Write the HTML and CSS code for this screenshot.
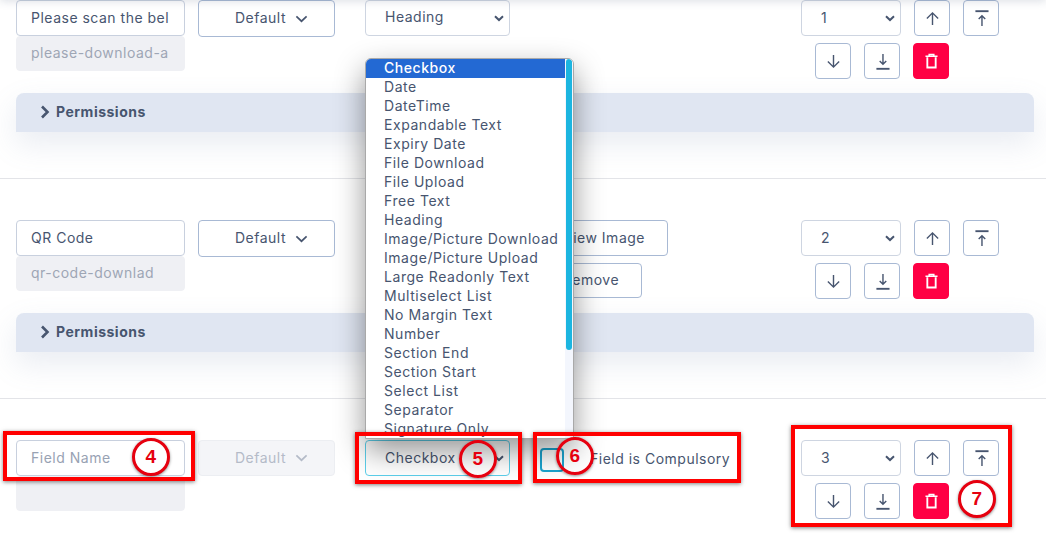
FILE: index.html
```html
<!DOCTYPE html>
<html lang="en">
<head>
<meta charset="utf-8">
<title>Form fields</title>
<link rel="stylesheet" href="styles.css">
</head>
<body>
<svg class="defs" width="0" height="0" aria-hidden="true">
  <symbol id="i-chev" viewBox="0 0 14 8"><path d="M1.5 1.2 7 6.4l5.5-5.2" fill="none" stroke="currentColor" stroke-width="1.8"/></symbol>
  <symbol id="i-right" viewBox="0 0 10 14"><path d="M2 1.5 7.5 7 2 12.5" fill="none" stroke="currentColor" stroke-width="2.6"/></symbol>
  <symbol id="i-up" viewBox="0 0 16 16"><path d="M8 15V2M2 8l6-6 6 6" fill="none" stroke="currentColor" stroke-width="1.5"/></symbol>
  <symbol id="i-down" viewBox="0 0 16 16"><path d="M8 1v13M2 8l6 6 6-6" fill="none" stroke="currentColor" stroke-width="1.5"/></symbol>
  <symbol id="i-top" viewBox="0 0 16 18"><path d="M1.500 1.200h14" stroke="currentColor" stroke-width="2" fill="none"/><path d="M8.500 17V6M5 9.500l3.500-3.500L12 9.500" fill="none" stroke="currentColor" stroke-width="1.5"/></symbol>
  <symbol id="i-bottom" viewBox="0 0 16 18"><path d="M1.500 16.800h14" stroke="currentColor" stroke-width="2" fill="none"/><path d="M8.500 1v11M5 8.500l3.500 3.500L12 8.500" fill="none" stroke="currentColor" stroke-width="1.500"/></symbol>
  <symbol id="i-trash" viewBox="0 0 14 16"><path d="M0.500 3h13M4.500 3V1h5v2" fill="none" stroke="currentColor" stroke-width="1.600"/><path d="M2.500 4v11h9V4" fill="none" stroke="currentColor" stroke-width="2"/></symbol>
</svg>

<div class="topshade"></div>

<main class="list">
  <section class="row">
    <div class="fields">
      <div class="names">
        <input class="input" type="text" value="Please scan the below QR code">
        <input class="input slug" type="text" value="please-download-and-install" disabled>
      </div>
      <button class="default" type="button">Default <svg class="chev"><use href="#i-chev"/></svg></button>
      <select class="select type"><option>Heading</option></select>
      <div class="extra"></div>
      <div class="order">
        <div class="order-line">
          <select class="select num"><option>1</option></select>
          <button class="icon" type="button"><svg class="ic"><use href="#i-up"/></svg></button>
          <button class="icon" type="button"><svg class="ic tall"><use href="#i-top"/></svg></button>
        </div>
        <div class="order-line second">
          <button class="icon" type="button"><svg class="ic"><use href="#i-down"/></svg></button>
          <button class="icon" type="button"><svg class="ic tall"><use href="#i-bottom"/></svg></button>
          <button class="icon danger" type="button"><svg class="ic trash"><use href="#i-trash"/></svg></button>
        </div>
      </div>
    </div>
    <div class="panel"><svg class="right"><use href="#i-right"/></svg>Permissions</div>
  </section>

  <section class="row">
    <div class="fields">
      <div class="names">
        <input class="input" type="text" value="QR Code">
        <input class="input slug" type="text" value="qr-code-downlad" disabled>
      </div>
      <button class="default" type="button">Default <svg class="chev"><use href="#i-chev"/></svg></button>
      <select class="select type"><option>Image/Picture Download</option></select>
      <div class="extra">
        <button class="plain view" type="button">View Image</button>
        <button class="plain remove" type="button">Remove</button>
      </div>
      <div class="order">
        <div class="order-line">
          <select class="select num"><option>2</option></select>
          <button class="icon" type="button"><svg class="ic"><use href="#i-up"/></svg></button>
          <button class="icon" type="button"><svg class="ic tall"><use href="#i-top"/></svg></button>
        </div>
        <div class="order-line second">
          <button class="icon" type="button"><svg class="ic"><use href="#i-down"/></svg></button>
          <button class="icon" type="button"><svg class="ic tall"><use href="#i-bottom"/></svg></button>
          <button class="icon danger" type="button"><svg class="ic trash"><use href="#i-trash"/></svg></button>
        </div>
      </div>
    </div>
    <div class="panel"><svg class="right"><use href="#i-right"/></svg>Permissions</div>
  </section>

  <section class="row last">
    <div class="fields">
      <div class="names">
        <input class="input" type="text" placeholder="Field Name">
        <input class="input slug" type="text" disabled>
      </div>
      <button class="default off" type="button" disabled>Default <svg class="chev"><use href="#i-chev"/></svg></button>
      <select class="select type focus"><option>Checkbox</option></select>
      <label class="extra check"><input class="box" type="checkbox"><span>Field is Compulsory</span></label>
      <div class="order">
        <div class="order-line">
          <select class="select num"><option>3</option></select>
          <button class="icon" type="button"><svg class="ic"><use href="#i-up"/></svg></button>
          <button class="icon" type="button"><svg class="ic tall"><use href="#i-top"/></svg></button>
        </div>
        <div class="order-line second">
          <button class="icon" type="button"><svg class="ic"><use href="#i-down"/></svg></button>
          <button class="icon" type="button"><svg class="ic tall"><use href="#i-bottom"/></svg></button>
          <button class="icon danger" type="button"><svg class="ic trash"><use href="#i-trash"/></svg></button>
        </div>
      </div>
    </div>
    <div class="panel edge"></div>
  </section>
</main>

<div class="dropdown">
  <ul class="options">
    <li class="selected">Checkbox</li>
    <li>Date</li>
    <li>DateTime</li>
    <li>Expandable Text</li>
    <li>Expiry Date</li>
    <li>File Download</li>
    <li>File Upload</li>
    <li>Free Text</li>
    <li>Heading</li>
    <li>Image/Picture Download</li>
    <li>Image/Picture Upload</li>
    <li>Large Readonly Text</li>
    <li>Multiselect List</li>
    <li>No Margin Text</li>
    <li>Number</li>
    <li>Section End</li>
    <li>Section Start</li>
    <li>Select List</li>
    <li>Separator</li>
    <li>Signature Only</li>
  </ul>
  <div class="track"><div class="thumb"></div></div>
</div>

<div class="mark box-4"></div>
<div class="mark box-5"></div>
<div class="mark box-6"></div>
<div class="mark box-7"></div>
<div class="badge badge-4">4</div>
<div class="badge badge-5">5</div>
<div class="badge badge-6">6</div>
<div class="badge badge-7">7</div>
</body>
</html>
```

FILE: styles.css
```css
* { box-sizing: border-box; }

html, body {
  margin: 0;
  height: 533px;
  overflow: hidden;
  background: #fff;
}

body {
  position: relative;
  font-family: Inter, "Liberation Sans", sans-serif;
  font-size: 14px;
  letter-spacing: 0.5px;
  color: #47556f;
}

.defs { position: absolute; }

.topshade {
  position: absolute;
  top: -6px;
  left: 0;
  right: 0;
  height: 6px;
  box-shadow: 0 0 10px rgba(70, 85, 120, 0.28);
  z-index: 1;
}

.list { margin-top: -41px; }

.row {
  height: 220px;
  padding: 41px 12px 0 16px;
  border-bottom: 1px solid #e3e4e8;
}

.row.last {
  height: 134px;
  border-bottom: 0;
}

.fields {
  display: flex;
  align-items: flex-start;
  height: 93px;
  padding-right: 35px;
}

.names {
  display: flex;
  flex-direction: column;
  width: 169px;
  margin-right: 13px;
}

input, select, button {
  font: inherit;
  letter-spacing: inherit;
  color: inherit;
}

.input {
  height: 36px;
  width: 100%;
  padding: 0 15px 2px 14px;
  background: #fff;
  border: 1px solid #c8d0de;
  border-radius: 4px;
  outline: 0;
}

.input::placeholder { color: #98a2b3; opacity: 1; }

.slug {
  height: 35px;
  background: #eff0f4;
  border-color: #eff0f4;
  color: #9ea6b5;
}

.default {
  width: 137px;
  height: 37px;
  margin-right: 30px;
  padding: 0 0 2px 10px;
  display: flex;
  align-items: center;
  justify-content: center;
  gap: 9px;
  background: #fff;
  border: 1px solid #a8b9d4;
  border-radius: 4px;
}

.default.off {
  height: 36px;
  background: #f4f5f8;
  border-color: #eceef2;
  color: #b4bbc8;
}

.chev { width: 13px; height: 8px; margin-top: 2px; }

.select {
  appearance: none;
  height: 36px;
  padding: 0 0 4px 19px;
  background: #fff url("data:image/svg+xml,%3Csvg xmlns='http://www.w3.org/2000/svg' width='10' height='7' viewBox='0 0 10 7'%3E%3Cpath d='M1 1.200 5 5l4-3.800' fill='none' stroke='%2347556f' stroke-width='2'/%3E%3C/svg%3E") no-repeat right 5px center;
  border: 1px solid #ced5e1;
  border-radius: 4px;
  outline: 0;
}

.type { width: 145px; margin-right: 30px; }

.type.focus {
  border-color: #5ccfea;
  padding-bottom: 2px;
}

.num { width: 100px; padding-bottom: 2px; }

.extra {
  position: relative;
  width: 261px;
  height: 79px;
  flex: none;
}

.plain {
  display: block;
  height: 36px;
  padding: 0 0 2px;
  background: #fff;
  border: 1px solid #a8b9d4;
  border-radius: 4px;
}

.view { width: 128px; margin-bottom: 7px; }

.remove { width: 102px; height: 35px; }

.check {
  display: flex;
  align-items: center;
  gap: 26px;
  height: 36px;
  padding-top: 1px;
}

.box {
  appearance: none;
  width: 24px;
  height: 24px;
  margin: 2px 0 0;
  border: 2px solid #1ba4cf;
  border-radius: 4px;
  background: #fff;
}

.order {
  display: flex;
  flex-direction: column;
  gap: 7px;
  width: 198px;
  flex: none;
}

.order-line {
  display: flex;
  gap: 13px;
}

.second { padding-left: 14px; }

.icon {
  width: 36px;
  height: 36px;
  padding: 0;
  display: flex;
  align-items: center;
  justify-content: center;
  background: #fff;
  border: 1px solid #a8b9d4;
  border-radius: 4px;
  color: #47556f;
}

.ic { width: 15px; height: 15px; }
.ic.tall { width: 15px; height: 17px; }
.ic.trash { width: 13px; height: 16px; }

.danger {
  background: #ff0044;
  border-color: #ff0044;
  color: #fff;
}

.panel {
  display: flex;
  align-items: center;
  height: 39px;
  padding: 0 0 2px 24px;
  gap: 6px;
  background: #e0e6f2;
  border-radius: 8px 8px 0 0;
  font-weight: 700;
  box-shadow: 0 12px 30px rgba(120, 135, 175, 0.16);
}

.panel.edge { height: 0; padding: 0; }

.right { width: 10px; height: 14px; }

.dropdown {
  position: absolute;
  left: 365px;
  top: 58px;
  width: 209px;
  height: 381px;
  display: flex;
  overflow: hidden;
  background: #fff;
  border: 1px solid #a9a9a9;
  border-radius: 6px 6px 0 0;
  box-shadow: 0 12px 30px rgba(0, 0, 0, 0.42);
  z-index: 2;
}

.options {
  flex: 1;
  margin: 0;
  padding: 0;
  list-style: none;
  line-height: 17px;
  letter-spacing: 0.55px;
}

.options li {
  height: 19px;
  padding-left: 18px;
  white-space: nowrap;
}

.options .selected {
  background: #2369d3;
  color: #fff;
  font-weight: 500;
}

.track {
  width: 8px;
  flex: none;
  background: #f3f6fd;
}

.thumb {
  width: 6px;
  height: 291px;
  margin-left: 1px;
  border-radius: 3px;
  background: #1cb5e0;
}

.mark {
  position: absolute;
  border: 4px solid #f00;
  box-shadow: 0 1px 4px rgba(0, 0, 0, 0.5);
  z-index: 3;
}

.box-4 { left: 3px; top: 431px; width: 192px; height: 50px; }
.box-5 { left: 355px; top: 432px; width: 167px; height: 52px; }
.box-6 { left: 533px; top: 432px; width: 208px; height: 51px; }
.box-7 { left: 791px; top: 425px; width: 221px; height: 102px; }

.badge {
  position: absolute;
  width: 38px;
  height: 38px;
  display: flex;
  align-items: center;
  justify-content: center;
  border: 3px solid #e6000f;
  border-radius: 50%;
  font-family: "Liberation Sans", sans-serif;
  font-size: 19px;
  font-weight: 700;
  color: #e6000f;
  box-shadow: 0 1px 3px rgba(0, 0, 0, 0.45);
  z-index: 4;
}

.badge-4 { left: 132px; top: 438px; background: #fff; }
.badge-5 { left: 459px; top: 440px; }
.badge-6 { left: 556px; top: 437px; }
.badge-7 { left: 958px; top: 480px; background: #fff; }
```
